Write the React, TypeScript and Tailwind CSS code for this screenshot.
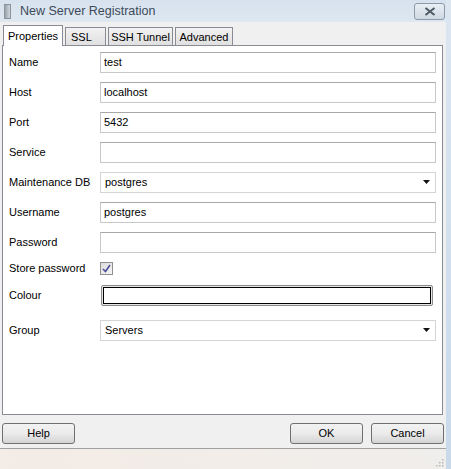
import * as React from "react";

const font = { fontFamily: "'Liberation Sans', Arial, sans-serif" };

const Field = ({ label, children }) => (
  <div className="flex items-center h-[30px]">
    <div className="w-[97px] pl-[6px] whitespace-nowrap text-[11px] text-black">{label}</div>
    <div className="flex-1 pr-[6px]">{children}</div>
  </div>
);

const TextBox = ({ value = "" }) => (
  <div className="h-[21px] border border-[#c6c8cc] border-t-[#a8a8a8] bg-white pl-[3px] text-[11px] leading-[19px] text-black">
    {value}
  </div>
);

const Combo = ({ value }) => (
  <div className="h-[21px] border border-[#d2d4d8] bg-white pl-[4px] pr-[5px] flex items-center justify-between text-[11px] text-black">
    <span>{value}</span>
    <svg width="7" height="4" viewBox="0 0 7 4">
      <path d="M0 0 H7 L3.5 4 Z" fill="#111" />
    </svg>
  </div>
);

const Button = ({ label, className = "" }) => (
  <div
    className={
      "h-[21px] w-[73px] rounded-[3px] border border-[#707070] bg-gradient-to-b from-[#f2f2f2] via-[#ebebeb] to-[#d4d4d4] flex items-center justify-center text-[11px] text-black " +
      className
    }
  >
    {label}
  </div>
);

const tabs = [
  { name: "Properties", w: "w-[60px] text-center" },
  { name: "SSL", w: "w-[41px] pl-[5px]" },
  { name: "SSH Tunnel", w: "w-[65px] text-center" },
  { name: "Advanced", w: "w-[58px] text-center" },
];

export default function App() {
  return (
    <div className="w-[451px] h-[469px] flex bg-[#d8e4f0] overflow-hidden" style={font}>
      <div className="w-[446px] flex flex-col">
        {/* title bar */}
        <div className="h-[22px] flex items-center bg-gradient-to-b from-[#d6e2ee] to-[#dfe8f1]">
          <div className="w-[7px] h-[15px] ml-[4px] bg-gradient-to-r from-[#9aa4ae] to-[#d0d6dc] border border-[#8a939c]" />
          <div className="ml-[9px] text-[12.5px] text-[#3c4a5a]">New Server Registration</div>
          <div className="ml-auto mr-[1px] mt-[1px] w-[31px] h-[17px] rounded-[3px] border border-[#8c9aa8] bg-gradient-to-b from-[#e8eef4] to-[#cfd9e3] flex items-center justify-center">
            <svg width="12" height="9" viewBox="0 0 12 9">
              <path d="M1.5 1 L10.5 8 M10.5 1 L1.5 8" stroke="#4d5964" strokeWidth="2" />
            </svg>
          </div>
        </div>

        {/* client area */}
        <div className="flex-1 bg-[#f0f0f0] flex flex-col">
          {/* tab strip */}
          <div className="flex items-end h-[21px] pl-[3px] mt-[2px]">
            {tabs.map((t, i) =>
              i === 0 ? (
                <div
                  key={t.name}
                  className={"h-[21px] border border-[#898c95] border-b-0 bg-white text-[11px] leading-[20px] whitespace-nowrap text-black relative z-10 -mb-px " + t.w}
                >
                  {t.name}
                </div>
              ) : (
                <div
                  key={t.name}
                  className={"h-[18px] ml-[2px] border border-[#898c95] border-b-0 bg-gradient-to-b from-[#f2f2f2] to-[#e0e0e0] text-[11px] leading-[18px] whitespace-nowrap text-black " + t.w}
                >
                  {t.name}
                </div>
              )
            )}
          </div>

          {/* tab panel */}
          <div className="ml-[2px] mr-[3px] h-[370px] border border-[#898c95] bg-white pt-[1px]">
            <Field label="Name"><TextBox value="test" /></Field>
            <Field label="Host"><TextBox value="localhost" /></Field>
            <Field label="Port"><TextBox value="5432" /></Field>
            <Field label="Service"><TextBox /></Field>
            <Field label="Maintenance DB"><Combo value="postgres" /></Field>
            <Field label="Username"><TextBox value="postgres" /></Field>
            <Field label="Password"><TextBox /></Field>
            <div className="flex items-center h-[20px] mt-[1px]">
              <div className="w-[97px] pl-[6px] whitespace-nowrap text-[11px] text-black">Store password</div>
              <div className="w-[13px] h-[13px] border border-[#8f8f8f] bg-gradient-to-br from-[#dcdcdc] to-[#f6f6f6] flex items-center justify-center">
                <svg width="9" height="9" viewBox="0 0 9 9">
                  <path d="M1 5 L3.5 7.5 L8 1" stroke="#4a4f9a" strokeWidth="1.6" fill="none" />
                </svg>
              </div>
            </div>
            <div className="flex items-center h-[34px]">
              <div className="w-[97px] pl-[6px] text-[11px] text-black">Colour</div>
              <div className="flex-1 pr-[9px]">
                <div className="h-[21px] ml-[1px] rounded-[2px] border border-[#8a8a8a] p-[1px] bg-[#e6e6e6]">
                  <div className="h-full border-[1.5px] border-black bg-white" />
                </div>
              </div>
            </div>
            <div className="mt-[3px]">
              <Field label="Group"><Combo value="Servers" /></Field>
            </div>
          </div>

          {/* buttons */}
          <div className="flex items-center h-[21px] mt-[8px] pl-[2px] pr-[2px]">
            <Button label="Help" />
            <Button label="OK" className="ml-auto" />
            <Button label="Cancel" className="ml-[8px]" />
          </div>

          {/* status strip */}
          <div className="mt-[4px] flex-1 border-t border-[#a0a0a0] bg-gradient-to-r from-[#f4ece6] to-[#f0eeec] relative">
            <svg className="absolute right-[2px] bottom-[2px]" width="10" height="10" viewBox="0 0 10 10">
              <g fill="#b8b8b8">
                <rect x="8" y="2" width="1.5" height="1.5" />
                <rect x="5" y="5" width="1.5" height="1.5" />
                <rect x="8" y="5" width="1.5" height="1.5" />
                <rect x="2" y="8" width="1.5" height="1.5" />
                <rect x="5" y="8" width="1.5" height="1.5" />
                <rect x="8" y="8" width="1.5" height="1.5" />
              </g>
            </svg>
          </div>
        </div>
      </div>
      <div className="flex-1 bg-gradient-to-b from-[#dbe6f1] to-[#c9d9ea]" />
    </div>
  );
}
